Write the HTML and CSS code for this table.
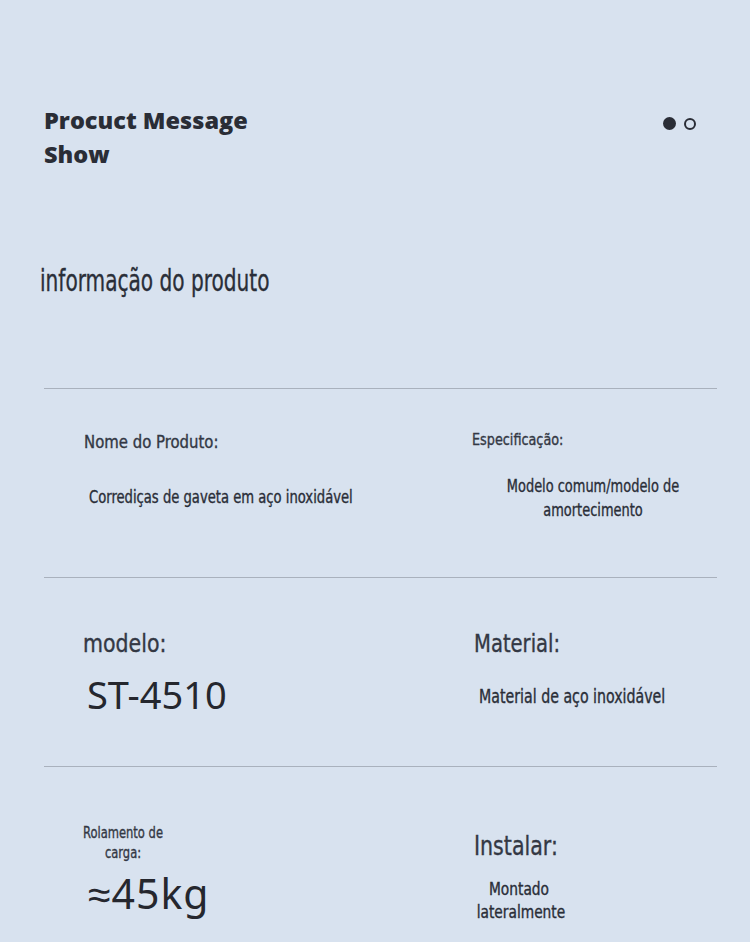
FILE: index.html
```html
<!DOCTYPE html>
<html lang="pt">
<head>
<meta charset="utf-8">
<title>Procuct Message Show</title>
<link rel="stylesheet" href="styles.css">
</head>
<body>
<div class="page">
  <header class="header">
    <h1 class="title">Procuct Message<br>Show</h1>
    <div class="dots"><span class="dot dot-on"></span><span class="dot dot-off"></span></div>
  </header>
  <h2 class="intro">informação do produto</h2>

  <section class="row row-1">
    <div class="cell cell-left">
      <div class="label label-name">Nome do Produto:</div>
      <div class="value value-name">Corrediças de gaveta em aço inoxidável</div>
    </div>
    <div class="cell cell-right">
      <div class="label label-spec">Especificação:</div>
      <div class="value value-spec">Modelo comum/modelo de<br>amortecimento</div>
    </div>
  </section>

  <section class="row row-2">
    <div class="cell cell-left">
      <div class="label label-model">modelo:</div>
      <div class="big big-model">ST-4510</div>
    </div>
    <div class="cell cell-right">
      <div class="label label-mat">Material:</div>
      <div class="value value-mat">Material de aço inoxidável</div>
    </div>
  </section>

  <section class="row row-3">
    <div class="cell cell-left cell-load">
      <div class="label label-load">Rolamento de<br>carga:</div>
      <div class="big big-load">≈45kg</div>
    </div>
    <div class="cell cell-right cell-install">
      <div class="label label-inst">Instalar:</div>
      <div class="value value-inst">Montado<br>lateralmente</div>
    </div>
  </section>
</div>
</body>
</html>
```

FILE: styles.css
```css
* { box-sizing: border-box; }
html, body { margin: 0; padding: 0; }
body {
  background: #d8e2ef;
  color: #2a2e38;
  width: 750px;
  height: 942px;
  overflow: hidden;
}
.page {
  padding: 0 33px 0 44px;
}
.header {
  display: flex;
  justify-content: space-between;
  align-items: flex-start;
  padding-top: 103px;
  padding-right: 21px;
}
.title {
  margin: 0;
  font-family: "Open Sans", sans-serif;
  font-weight: 800;
  font-size: 23.5px;
  line-height: 34px;
  color: #2a2d36;
}
.dots {
  display: flex;
  gap: 8px;
  margin-top: 14px;
}
.dot {
  width: 13px;
  height: 13px;
  border-radius: 50%;
}
.dot-on { background: #2a2d36; }
.dot-off { border: 2px solid #2a2d36; width: 12px; height: 12px; margin-top: 1px; }

.intro, .label, .value {
  font-family: "DejaVu Sans Condensed", "DejaVu Sans", sans-serif;
  font-stretch: condensed;
  font-weight: normal;
  margin: 0;
  white-space: nowrap;
  transform-origin: left center;
  -webkit-text-stroke: 0.35px currentColor;
}
.intro {
  font-size: 30px;
  line-height: 34px;
  margin: 93px 0 90px -4px;
  transform: scaleX(0.745);
}
.row {
  display: grid;
  grid-template-columns: 428px 1fr;
  border-top: 1px solid #a9b1bd;
  height: 189px;
}
.row-3 { height: 200px; }
.cell-left { padding-left: 40px; }
.row-1 .cell { padding-top: 41px; }
.row-2 .cell { padding-top: 51px; }
.cell-load { padding-top: 56px; }
.cell-install { padding-top: 64px; }

.label { color: #333844; }

.label-name { font-size: 18px; line-height: 24px; transform: scaleX(0.92); }
.label-spec { font-size: 16px; line-height: 20px; transform: scaleX(0.89); }
.label-model { font-size: 24px; line-height: 30px; margin-left: -1px; transform: scaleX(0.95); }
.label-mat { font-size: 25px; line-height: 30px; margin-left: 2px; transform: scaleX(0.87); }
.label-inst { font-size: 26px; line-height: 30px; margin-left: 2px; transform: scaleX(0.88); }
.label-load {
  font-size: 16px;
  line-height: 20px;
  width: 118px;
  margin-left: -20px;
  text-align: center;
  transform-origin: center;
  transform: scaleX(0.8);
}

.value-name { font-size: 17px; line-height: 24px; margin: 31px 0 0 5px; transform: scaleX(0.86); }
.value-spec {
  font-size: 18px;
  line-height: 24px;
  margin-top: 24px;
  width: 242px;
  text-align: center;
  transform-origin: center;
  transform: scaleX(0.8);
}
.value-mat { font-size: 19px; line-height: 24px; margin: 25px 0 0 7px; transform: scaleX(0.83); }
.value-inst {
  font-size: 17px;
  line-height: 23px;
  margin-top: 17px;
  width: 94px;
  text-align: center;
  transform-origin: center;
  transform: scaleX(0.9);
}

.big {
  font-family: "Noto Sans", sans-serif;
  font-weight: normal;
  color: #25272e;
}
.big-model { font-size: 38px; line-height: 44px; margin: 13px 0 0 3px; }
.big-load { font-size: 41px; line-height: 48px; margin: 6px 0 0 4px; letter-spacing: 1px; }
```
